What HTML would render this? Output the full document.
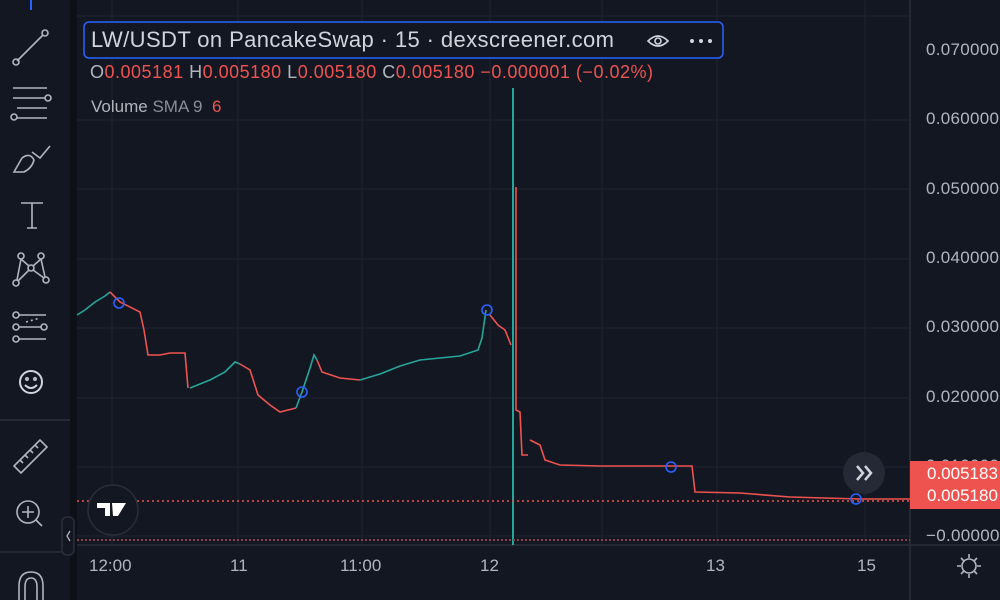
<!DOCTYPE html>
<html><head><meta charset="utf-8"><style>
body{margin:0;width:1000px;height:600px;background:#131722;overflow:hidden;font-family:"Liberation Sans",sans-serif;position:relative}
.tb{position:absolute;left:0;top:0;width:70px;height:600px;background:#131722}
.gap{position:absolute;left:70px;top:0;width:7px;height:600px;background:#0d1017}
.t{position:absolute;color:#b2b5be;font-size:14px;white-space:nowrap}
.ax{position:absolute;font-size:17px;color:#b2b5be;letter-spacing:0.3px}
.tm{position:absolute;top:556px;font-size:17px;color:#b2b5be}
</style></head><body>
<div class="tb"></div><div class="gap"></div>
<svg width="1000" height="600" style="position:absolute;left:0;top:0" fill="none" stroke="#b2b5be" stroke-width="1.6">
<line x1="31" y1="0" x2="31" y2="10" stroke="#2962ff" stroke-width="2"/>
<line x1="17" y1="61" x2="43" y2="35"/><circle cx="16" cy="62" r="3"/><circle cx="45" cy="33" r="3"/>
<line x1="13" y1="88" x2="47" y2="88"/><line x1="13" y1="98" x2="45" y2="98"/><line x1="17" y1="108" x2="47" y2="108"/><line x1="17" y1="118" x2="47" y2="118"/><circle cx="48" cy="98" r="3"/><circle cx="14" cy="117" r="3"/>
<path d="M14 172 L22 158 Q30 152 34 160 Q32 168 24 172 Z M32 152 L40 158 L50 146"/>
<path d="M21 203 H43 M32 203 V228 M27 228 H37"/>
<circle cx="21" cy="256" r="3"/><circle cx="41" cy="256" r="3"/><circle cx="31" cy="268" r="3"/><circle cx="16" cy="283" r="3"/><circle cx="46" cy="280" r="3"/>
<path d="M21 259 L17 280 M21 259 L29 266 M41 259 L33 266 M41 259 L45 277 M29 270 L18 281 M33 270 L44 278"/>
<circle cx="16" cy="315" r="3"/><line x1="19" y1="315" x2="46" y2="315"/><circle cx="16" cy="327" r="3"/><line x1="19" y1="327" x2="42" y2="327"/><circle cx="44" cy="327" r="3"/><circle cx="16" cy="339" r="3"/><line x1="19" y1="339" x2="46" y2="339"/>
<path d="M26 322 L40 318" stroke-dasharray="2 3"/>
<circle cx="31" cy="382" r="11" stroke="#d1d4dc" stroke-width="2"/><circle cx="27" cy="379" r="1.3" fill="#d1d4dc"/><circle cx="35" cy="379" r="1.3" fill="#d1d4dc"/><path d="M25 385 Q31 391 37 385" stroke-width="2" stroke="#d1d4dc"/>
<line x1="0" y1="420" x2="70" y2="420" stroke="#2a2e39"/>
<path d="M14 466 L40 440 L47 447 L21 473 Z M20 460 l3 3 M25 455 l3 3 M30 450 l3 3 M35 445 l3 3"/>
<circle cx="28" cy="512" r="11"/><path d="M28 506 V518 M22 512 H34 M36 520 L42 526"/>
<line x1="0" y1="552" x2="70" y2="552" stroke="#2a2e39"/>
<path d="M19 600 V586 Q19 572 31 572 Q43 572 43 586 V600 M25 600 V587 Q25 578 31 578 Q37 578 37 587 V600"/>
<rect x="62" y="517" width="12" height="38" rx="5" fill="#131722" stroke="#2a2e39"/>
<path d="M70 531 L67 536 L70 541" stroke-width="1.3"/>
<g stroke="#1f2330" stroke-width="1">
<line x1="77" y1="16" x2="910" y2="16"/>
<line x1="77" y1="120" x2="910" y2="120"/><line x1="77" y1="189" x2="910" y2="189"/><line x1="77" y1="259" x2="910" y2="259"/><line x1="77" y1="328" x2="910" y2="328"/><line x1="77" y1="398" x2="910" y2="398"/><line x1="77" y1="467" x2="910" y2="467"/><line x1="77" y1="536" x2="910" y2="536"/>
<line x1="112" y1="0" x2="112" y2="545"/><line x1="238" y1="0" x2="238" y2="545"/><line x1="362" y1="0" x2="362" y2="545"/><line x1="490" y1="0" x2="490" y2="545"/><line x1="602" y1="0" x2="602" y2="545"/><line x1="717" y1="0" x2="717" y2="545"/><line x1="865" y1="0" x2="865" y2="545"/>
</g>
<line x1="77" y1="545" x2="1000" y2="545" stroke="#2a2e39"/>
<line x1="910" y1="0" x2="910" y2="600" stroke="#2a2e39"/>
<g stroke-width="1.6">
<path stroke="#26a69a" d="M77 315 L85 310 L95 302 L105 296 L110 292"/>
<path stroke="#ef5350" d="M110 292 L120 302 L140 312 L144 330 L148 355 L160 355 L170 353 L185 353 L188 388"/>
<path stroke="#26a69a" d="M190 388 L210 380 L225 372 L235 362 L240 364"/>
<path stroke="#ef5350" d="M240 364 L250 370 L258 395 L270 405 L280 412 L296 408"/>
<path stroke="#26a69a" d="M296 408 L302 392 L310 368 L314 355 L317 360"/>
<path stroke="#ef5350" d="M317 360 L322 372 L340 378 L360 380"/>
<path stroke="#26a69a" d="M360 380 L380 374 L400 366 L420 360 L460 356 L478 350 L482 338 L486 310"/>
<path stroke="#ef5350" d="M490 315 L498 325 L505 330 L511 345"/>
<path stroke="#ef5350" d="M516 187 L516 410 L520 412 L522 455 L528 455"/>
<path stroke="#ef5350" d="M530 440 L540 445 L545 460 L560 465 L600 466 L692 466 L695 492 L740 493 L790 497 L860 499 L910 499"/>
</g>
<line x1="513" y1="88" x2="513" y2="545" stroke="#26a69a" stroke-width="2"/>
<line x1="77" y1="501" x2="910" y2="501" stroke="#ef5350" stroke-width="1.5" stroke-dasharray="2 3"/>
<line x1="77" y1="540" x2="910" y2="540" stroke="#8a4048" stroke-width="2" stroke-dasharray="2 2"/>
<g stroke="#2962ff" stroke-width="1.6">
<circle cx="119" cy="303" r="5"/><circle cx="302" cy="392" r="5"/><circle cx="487" cy="310" r="5"/><circle cx="671" cy="467" r="5"/><circle cx="856" cy="499" r="5"/>
</g>
<circle cx="113" cy="510" r="25" stroke="#2a2e39" fill="#131722" stroke-width="1.5"/>
<path d="M97 503 H110 V516 H105 V508 H97 Z M112 503 H126 L118 516 H113 Z" fill="#fff" stroke="none"/>
<circle cx="864" cy="473" r="21" fill="#252935" stroke="none"/>
<path d="M857 466 L863 473 L857 480 M865 466 L871 473 L865 480" stroke="#d1d4dc" stroke-width="2.5"/>
<circle cx="969" cy="566" r="7"/><path d="M969 554 v4 M969 574 v4 M957 566 h4 M977 566 h4 M961 558 l3 3 M974 571 l3 3 M977 558 l-3 3 M961 574 l3 -3"/>
<rect x="84" y="22" width="639" height="36" rx="5" stroke="#2962ff" stroke-width="1.5" fill="#131722"/>
<path d="M648 41 Q658 31 668 41 Q658 51 648 41 Z" stroke="#d1d4dc"/><circle cx="658" cy="41" r="3" stroke="#d1d4dc"/>
<g fill="#d1d4dc" stroke="none"><circle cx="692" cy="41" r="2"/><circle cx="701" cy="41" r="2"/><circle cx="710" cy="41" r="2"/></g>
</svg>
<div class="t" style="left:91px;top:27px;font-size:22px;letter-spacing:0.4px;color:#d1d4dc">LW/USDT on PancakeSwap · 15 · dexscreener.com</div>
<div class="t" style="left:90px;top:62px;font-size:18px;letter-spacing:0.5px;color:#ef5350"><span style="color:#b2b5be">O</span>0.005181 <span style="color:#b2b5be">H</span>0.005180 <span style="color:#b2b5be">L</span>0.005180 <span style="color:#b2b5be">C</span>0.005180 −0.000001 (−0.02%)</div>
<div class="t" style="left:91px;top:97px;font-size:17px;color:#b2b5be">Volume <span style="color:#8a8e99">SMA 9</span> &nbsp;<span style="color:#ef5350">6</span></div>
<div class="ax" style="top:40px;left:926px">0.070000</div>
<div class="ax" style="top:109px;left:926px">0.060000</div>
<div class="ax" style="top:179px;left:926px">0.050000</div>
<div class="ax" style="top:248px;left:926px">0.040000</div>
<div class="ax" style="top:317px;left:926px">0.030000</div>
<div class="ax" style="top:387px;left:926px">0.020000</div>
<div class="ax" style="top:456px;left:926px">0.010000</div>
<div class="ax" style="top:526px;left:926px">−0.00000</div>
<div style="position:absolute;left:910px;top:461px;width:90px;height:48px;background:#ef5350;color:#fff;font-size:17px;line-height:22px;padding:2px 0 0 17px;box-sizing:border-box;white-space:nowrap">0.005183<br>0.005180</div>
<div class="tm" style="left:89px">12:00</div>
<div class="tm" style="left:230px">11</div>
<div class="tm" style="left:340px">11:00</div>
<div class="tm" style="left:480px">12</div>
<div class="tm" style="left:706px">13</div>
<div class="tm" style="left:857px">15</div>
</body></html>
